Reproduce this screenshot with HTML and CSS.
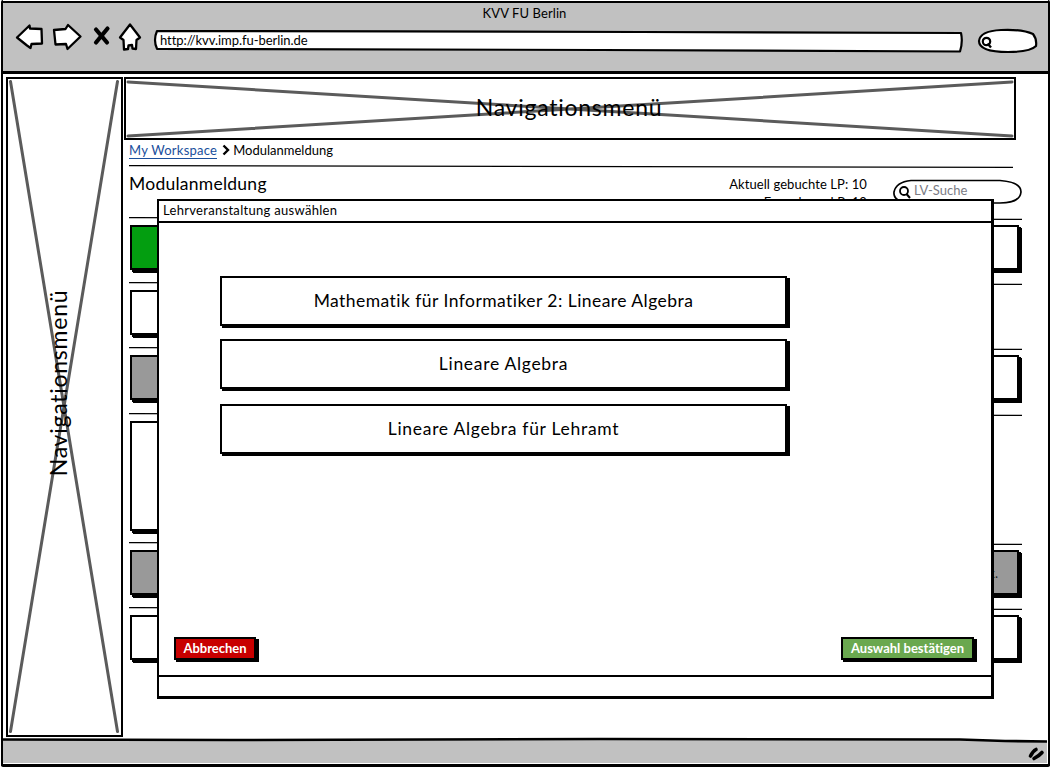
FILE: index.html
```html
<!DOCTYPE html>
<html lang="de">
<head>
<meta charset="utf-8">
<title>KVV FU Berlin</title>
<link rel="stylesheet" href="styles.css">
</head>
<body>
<div class="browser">
  <header class="chrome">
    <div class="window-title"><span>KVV FU Berlin</span></div>
    <div class="toolbar">
      <svg class="tools" width="130" height="36" viewBox="12 20 130 36">
        <g fill="#fff" stroke="#000" stroke-width="2.300" stroke-linejoin="round">
          <path d="M17 37.500L29.500 25.500L30 28.500L41.500 29L42 43.500L31.500 44L30.500 48L27 45.500Z"/>
          <path d="M54 30L65.500 29L68 25L80.500 36.500L67.500 49L66 44L55.500 44.500Z"/>
          <path d="M120 37.500L130 24.500L140 37.500L136.500 40L136 49L132.500 48.500L132 45L128.500 45.500L128 49L124 49.500L123.500 40Z"/>
        </g>
        <path d="M96 29.500L107 42.500M107.500 28.500L96 42.500" stroke="#000" stroke-width="4.200" stroke-linecap="round"/>
      </svg>
      <div class="address">
        <svg class="outline" width="810" height="24" viewBox="153 29 810 24"><path d="M157 31L400 31.300L640 32L961 33Q963 42 960 51.500L600 50L157 48.800Q153 40 157 31Z" fill="#fff" stroke="#000" stroke-width="2.200" stroke-linejoin="round"/></svg>
        <span>http://kvv.imp.fu-berlin.de</span>
      </div>
      <svg class="chrome-search" width="62" height="26" viewBox="977 28 62 26">
        <path d="M979 41Q980 31 1001 30Q1022 29 1033 34Q1037 39 1036 46Q1030 52 1008 52Q979 52 979 41Z" fill="#fff" stroke="#000" stroke-width="2.200"/>
        <ellipse cx="986.500" cy="41.500" rx="3.700" ry="3.700" fill="none" stroke="#000" stroke-width="2.200"/><path d="M987.500 43.500L991 47.500" stroke="#000" stroke-width="2.400"/>
      </svg>
    </div>
  </header>

  <div class="page">
    <aside class="sidebar">
      <svg class="cross" width="112" height="655" viewBox="8.500 79.500 112 655"><path d="M11 82L118 732M118 82L11 732"/></svg>
      <span>Navigationsmenü</span>
    </aside>
    <main class="main">
      <nav class="topnav">
        <svg class="cross" width="888" height="59" viewBox="126 79 888 59"><path d="M128 82L1012 136M128 136L1012 82"/></svg>
        <span>Navigationsmenü</span>
      </nav>
      <div class="content">
        <div class="crumbs">
          <a class="crumb-link">My Workspace</a>
          <svg width="8" height="12" viewBox="0 0 8 12"><path d="M1.500 1.500Q4 4 6 6Q4 8 1.500 10.500" fill="none" stroke="#000" stroke-width="2.400"/></svg>
          <span class="crumb">Modulanmeldung</span>
        </div>
        <svg class="rule rule-short" viewBox="0 0 884 3" preserveAspectRatio="none"><path d="M0 .7L884 2.300"/></svg>
        <div class="heading">
          <h1>Modulanmeldung</h1>
          <div class="credits"><div>Aktuell gebuchte LP: 10</div><div>Erworbene LP: 10</div></div>
          <div class="search">
            <svg class="outline" width="130" height="26" viewBox="892 179 130 26">
              <path d="M894 192Q896 182 911 180.500L1000 180.500Q1021 182 1021 192Q1020 203 1000 203L908 203Q893 201 894 192Z" fill="#fff" stroke="#000" stroke-width="1.700"/>
              <circle cx="904" cy="191" r="4" fill="none" stroke="#000" stroke-width="1.800"/><path d="M906.500 194L910 198" stroke="#000" stroke-width="2"/>
            </svg>
            <span>LV-Suche</span>
          </div>
        </div>
        <div class="rows">
          <section class="row"><svg class="rule" viewBox="0 0 893 3" preserveAspectRatio="none"><path d="M0 .7L893 2.300"/></svg><div class="cells"><div class="box green"></div><div class="box"></div></div></section>
          <section class="row"><svg class="rule" viewBox="0 0 893 3" preserveAspectRatio="none"><path d="M0 .7L893 2.300"/></svg><div class="cells"><div class="box"></div></div></section>
          <section class="row row-66"><svg class="rule" viewBox="0 0 893 3" preserveAspectRatio="none"><path d="M0 .7L893 2.300"/></svg><div class="cells"><div class="box gray"></div><div class="box"></div></div></section>
          <section class="row row-tall"><svg class="rule" viewBox="0 0 893 3" preserveAspectRatio="none"><path d="M0 .7L893 2.300"/></svg><div class="cells"><div class="box"></div></div></section>
          <section class="row"><svg class="rule" viewBox="0 0 893 3" preserveAspectRatio="none"><path d="M0 .7L893 2.300"/></svg><div class="cells"><div class="box gray"></div><div class="box gray note">k.</div></div></section>
          <section class="row"><svg class="rule" viewBox="0 0 893 3" preserveAspectRatio="none"><path d="M0 .7L893 2.300"/></svg><div class="cells"><div class="box"></div><div class="box"></div></div></section>
        </div>
      </div>
    </main>
  </div>

  <footer class="status">
    <svg width="1044" height="26" viewBox="3 738 1044 26">
      <path d="M3 740.500L230 741L600 740L960 740.500L1005 742L1047 742.500V764H3Z" fill="#c1c1c1"/>
      <path d="M3 740.500L230 741L600 740L960 740.500L1005 742L1047 742.500" fill="none" stroke="#000" stroke-width="2.600"/>
      <path d="M1030.500 757Q1033 752 1036 750.500M1034 759.500Q1039 757 1042 753.500" fill="none" stroke="#000" stroke-width="3.600" stroke-linecap="round"/>
    </svg>
  </footer>

  <div class="modal">
    <div class="modal-title"><span>Lehrveranstaltung auswählen</span></div>
    <div class="modal-body">
      <div class="options">
        <div class="option"><span>Mathematik für Informatiker 2: Lineare Algebra</span></div>
        <div class="option"><span>Lineare Algebra</span></div>
        <div class="option"><span>Lineare Algebra für Lehramt</span></div>
      </div>
      <div class="actions">
        <div class="btn cancel"><span>Abbrechen</span></div>
        <div class="btn confirm"><span>Auswahl bestätigen</span></div>
      </div>
    </div>
    <div class="modal-foot"></div>
  </div>
</div>
</body>
</html>
```
FILE: styles.css
```css
* { box-sizing: border-box; }
body { margin: 0; background: #fff; color: #000; font: 13px/16px Lato, "Liberation Sans", sans-serif; font-variant-ligatures: none; overflow: hidden; }
svg { display: block; flex: none; }
span, a { white-space: nowrap; }
.browser { position: relative; width: 1049px; height: 767px; margin-left: 1px; padding-top: 1px; display: flex; flex-direction: column; }
.browser { border: solid #000; border-width: 0 2.500px 3px 2px; border-radius: 2px; }
.chrome { height: 73px; background: #c1c1c1; border-top: 2px solid #000; border-bottom: 3px solid #000; }
.window-title { height: 20px; display: flex; justify-content: center; padding: 2px 2px 0 0; letter-spacing: .1px; }
.toolbar { display: flex; align-items: flex-start; padding-left: 9px; margin-top: -3px; }
.address { position: relative; width: 810px; height: 24px; margin: 9px 14px 0 11px; padding: 3px 0 0 7px; }
.address span { position: relative; letter-spacing: -.05px; }
.outline { position: absolute; left: 0; top: 0; }
.chrome-search { margin-top: 8px; }
.page { display: flex; height: 664px; padding: 3px 0 0 3px; gap: 1px; }
.sidebar { width: 117px; height: 660px; border: 2.500px solid #000; position: relative; display: flex; align-items: center; justify-content: center; }
.cross { position: absolute; left: 0; top: 0; }
.cross path { fill: none; stroke: #5b5b5b; stroke-width: 3; stroke-linecap: round; }
.sidebar span { position: relative; transform: rotate(-90deg); margin-top: -48px; margin-right: 13px; }
.sidebar span, .topnav span { font-size: 23px; line-height: 28px; letter-spacing: .75px; }
.main { width: 900px; }
.topnav { position: relative; width: 892px; height: 63px; border: 2px solid #000; display: flex; align-items: center; justify-content: center; padding: 0 2px 4px 0; }
.topnav span { position: relative; }
.content { padding-left: 5px; width: 898px; }
.crumbs { height: 25px; display: flex; align-items: flex-start; padding-top: 2px; }
.crumb-link { color: #1a4f9c; border-bottom: 1px solid #1a4f9c; line-height: 16px; letter-spacing: .25px; }
.crumbs svg { margin: 2px 3px 0 5px; }
.crumb { letter-spacing: 0; }
.rule { width: 893px; height: 3px; }
.rule-short { width: 884px; }
.rule path { fill: none; stroke: #000; stroke-width: 1.300; }
.heading { display: flex; height: 49px; padding-top: 5px; }
h1 { margin: 0; width: 500px; font-size: 17.500px; font-weight: 400; line-height: 21px; letter-spacing: .25px; }
.credits { width: 238px; text-align: right; line-height: 18px; padding-top: 2px; letter-spacing: .08px; }
.search { position: relative; width: 130px; height: 26px; margin: 6px 0 0 25px; padding: 3px 0 0 22px; color: #7b7b84; }
.search span { position: relative; }
.row { height: 65px; width: 893px; }
.row-66 { height: 66px; }
.row-tall { height: 129px; }
.cells { display: flex; justify-content: space-between; padding: 5px 3px 0 1px; height: 50px; }
.row-tall .cells { height: 115px; }
.box { width: 200px; background: #fff; border: 2px solid #000; box-shadow: 2px 2px 0 #000, 3px 3px 0 #000; }
.green { background: #039e10; }
.gray { background: #999; }
.note { text-align: right; padding: 13px 19px 0 0; color: #222; font-size: 13px; }
.status { height: 26px; margin-top: -1px; }
.modal { position: absolute; left: 156px; top: 199px; width: 837px; height: 500px; background: #fff; border: solid #000; border-width: 2px 3px 3px 2px; display: flex; flex-direction: column; margin-left: -2px; }
.modal-title { height: 22px; border-bottom: 2px solid #000; padding: 1px 4px; letter-spacing: .3px; }
.modal-body { flex: 1; padding: 53px 13px 15px 15px; display: flex; flex-direction: column; justify-content: space-between; }
.modal-foot { height: 21px; border-top: 2px solid #000; }
.options { display: flex; flex-direction: column; gap: 13px; padding-left: 46px; }
.option { width: 567px; height: 50px; border: 2px solid #000; box-shadow: 2px 2px 0 #000, 3px 2px 0 #000; display: flex; align-items: center; justify-content: center; font-size: 17.500px; letter-spacing: .45px; }
.option + .option { letter-spacing: .7px; }
.option + .option + .option { margin-top: 2px; }
.actions { display: flex; justify-content: space-between; margin-right: 4px; }
.btn { height: 23px; border: 2px solid #000; box-shadow: 2px 2px 0 #000, 3px 2px 0 #000; color: #fff; font-weight: 700; line-height: 19px; text-align: center; }
.cancel { width: 82px; background: #c80000; }
.confirm { width: 133px; background: #6aa84f; }
```
